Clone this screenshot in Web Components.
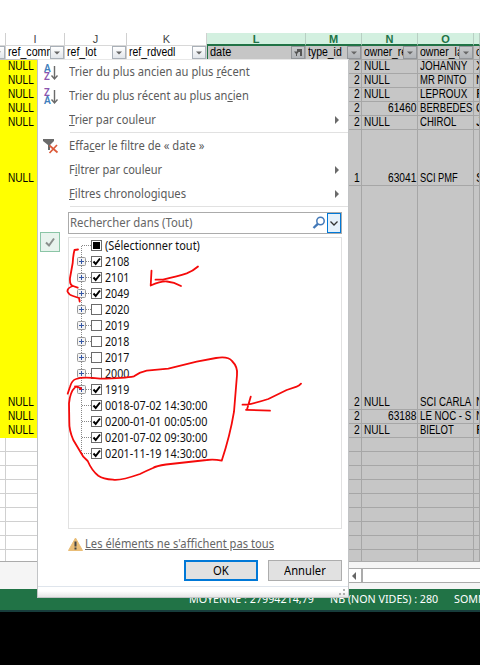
<!DOCTYPE html>
<html lang="fr"><head><meta charset="utf-8"><title>Filtre de date</title>
<style>html,body{margin:0;width:480px;height:665px;overflow:hidden;background:#000}</style></head>
<body><filter-screen></filter-screen>
<script>
const define=(name,cls)=>customElements.define(name,cls);
const mount=(el,html)=>{(el.shadowRoot||el.attachShadow({mode:'open'})).innerHTML=html;};

/* Text condensed or stretched to the width given in w */
define('fit-text',class extends HTMLElement{
  connectedCallback(){
    const w=+this.getAttribute('w');
    mount(this,`<style>:host{display:inline-block;width:${w}px;white-space:pre;text-align:left}span{display:inline-block;transform-origin:0 50%}</style><span><slot></slot></span>`);
    const s=this.shadowRoot.querySelector('span');
    const n=s.offsetWidth;
    if(n)s.style.transform=`scaleX(${w/n})`;
  }
});

const t=(s,w)=>s?`<fit-text w="${w}">${s}</fit-text>`:'';

define('filter-button',class extends HTMLElement{
  connectedCallback(){
    const on=this.hasAttribute('on'),g=this.hasAttribute('grey');
    mount(this,`<style>:host{display:block;flex:none;width:12px;height:11px;border:1px solid ${g?'#929599':'#a9b0b8'};background:${g?'linear-gradient(#c8cacc,#b2b5b9)':'linear-gradient(#fff,#e2e6eb)'}}svg{display:block}</style>
    <svg width="12" height="11">${on?'<path d="M5 2h5v7H8V5H5zM2 4.500h5L5 7v2H4V7z" fill="#555"/>':'<path d="M3 4.500h6L6 7.500z" fill="#666"/>'}</svg>`);
  }
});

define('sheet-grid',class extends HTMLElement{
  connectedCallback(){
    const cols='6px 59px 62px 80px 99px 56px 56px 56px 6px';
    const heads=['','I','J','K','L','M','N','O',''];
    const filt=[null,['ref_comm',47],['ref_lot',29],['ref_rdvedl',46],['date',21],['type_id',34],['owner_re',43],['owner_la',43],['o',6]];
    const rows=[[14,'NULL',26,'2','NULL','','JOHANNY',47,'X'],[14,'NULL',26,'2','NULL','','MR PINTO',46,'N'],[14,'NULL',26,'2','NULL','','LEPROUX',47,'F'],[14,'NULL',26,'2','','61460','BERBEDES',52,'C'],[14,'NULL',26,'2','NULL','','CHIROL',36,'J'],[56,'NULL',26,'1','','63041','SCI PMF',38,'S'],[224,'NULL',26,'2','NULL','','SCI CARLA',51,'N'],[14,'NULL',26,'2','','63188','LE NOC - S',51,'N'],[14,'NULL',26,'2','NULL','','BIELOT',34,'F']];
    for(let i=0;i<9;i++)rows.push([14,'',0,'','','','',0,'']);
    mount(this,`<style>
    :host{display:block;background:#fff;font:12px/12px "Liberation Sans",sans-serif;color:#000}
    .r{display:grid;grid-template-columns:${cols};box-sizing:border-box}
    .r>div{box-sizing:border-box;border-right:1px solid #d0d0d0;overflow:hidden;white-space:nowrap;min-width:0}
    .h{height:13px}
    .top{height:33px}
    .h>div{text-align:center;line-height:12px;height:13px;color:#444;font-size:11px;border-bottom:1px solid #d8d8d8}
    .h>.g{background:#d3f0e0;color:#217346;font-weight:bold;border-bottom:2px solid #217346;border-right-color:#b8cfc3}
    .f{height:14px}
    .f>div{display:flex;padding-left:2px;line-height:14px;height:14px;position:relative;border-bottom:1px solid #c5c5c5}
    .f fit-text{flex:none;height:13px;margin-top:-1px}.f filter-button{position:absolute;right:0;top:0}
    .f>.g,.d>.g{background:#c6c6c6;border-right-color:#a6a6a6}.f>.g{border-bottom-color:#a6a6a6}
    .d>div{display:flex;align-items:flex-end;border-bottom:1px solid #d0d0d0;padding-left:2px;padding-bottom:1px}
    .d>.g{border-bottom-color:#a6a6a6}.d>.y{background:#ff0;border-color:#ff0}.d>.n{justify-content:flex-end;padding-right:1px}
    </style>
    <div class="top"></div>
    <div class="r h">${heads.map((h,i)=>`<div class="${i>3?'g':''}">${h}</div>`).join('')}</div>
    <div class="r f">${filt.map((f,i)=>`<div class="${i>3?'g':''}"${i==4?' style="box-shadow:inset 1px 0 #217346;padding-left:3px"':''}>${f?t(f[0],f[1]):''}${i<8?`<filter-button ${i==4?'on':''} ${i>3?'grey':''}></filter-button>`:''}</div>`).join('')}</div>
    ${rows.map(r=>{const y=r[1]?'y':'';return `<div class="r d" style="height:${r[0]}px;"><div class="${y}"></div><div class="${y}">${t(r[1],26)}</div><div></div><div></div><div class="g"></div><div class="g n">${t(r[3],6)}</div><div class="g ${r[5]?'n':''}">${t(r[4],26)}${t(r[5],28)}</div><div class="g">${t(r[6],r[7])}</div><div class="g">${t(r[8],8)}</div></div>`}).join('')}`);
  }
});

define('status-strip',class extends HTMLElement{
  connectedCallback(){
    mount(this,`<style>:host{display:block;background:#f5f5f5;border-top:1px solid #ababab;box-sizing:border-box;height:51px}
    .s{height:27px;display:flex;padding:6px 0 6px 348px;box-sizing:border-box}
    .a{width:13px;box-sizing:border-box;border:1px solid #ababab;border-right:0;background:#fff}.b{flex:1;border:1px solid #ababab;border-left:2px solid #ababab;border-right:0;background:#fff}
    .g{height:21px;background:#217346;border-bottom:2px solid #173c3b;display:flex;padding-left:189px;color:#fff;font:11.500px/19px "Noto Sans",sans-serif;overflow:hidden}
    fit-text+fit-text{margin-left:16px}svg{display:block}</style>
    <div class="s"><div class="a"><svg width="12" height="13"><path d="M7 3v8L3 7z" fill="#666"/></svg></div><div class="b"></div></div>
    <div class="g">${t('MOYENNE : 27994214,79',125)}${t('NB (NON VIDES) : 280',108)}${t('SOMME : 7',54)}</div>`);
  }
});

define('menu-item',class extends HTMLElement{
  connectedCallback(){
    const k=this.getAttribute('icon');
    const az=(a,b,c,d)=>`<g font-family="Noto Sans" font-weight="600" font-size="10"><text x="1" y="8" fill="${c}">${a}</text><text x="1" y="16" fill="${d}">${b}</text></g><path d="M11.500 2v13M8.500 11.500l3 3.500 3-3.500" fill="none" stroke="#6a6a6a" stroke-width="1.400"/>`;
    const icons={az:az('A','Z','#3f80bd','#8a55ae'),za:az('Z','A','#8a55ae','#3f80bd'),
      clear:'<path d="M0 1h11v2L7 7v5H5V7L0 3z" fill="#6b6b6b"/><path d="M6.500 7.500l8 7M14 7l-7.500 8" stroke="#dc5a3a" stroke-width="1.700" fill="none"/>'};
    mount(this,`<style>:host{height:24px;display:grid;grid-template-columns:31px 1fr 14px;align-items:center;font:12px/24px "Noto Sans",sans-serif;color:#5b5b5b}svg{display:block}</style>
    <svg width="16" height="17" viewBox="0 0 16 17" style="margin-left:5px">${icons[k]||''}</svg><span><slot></slot></span>
    <svg width="6" height="9">${this.hasAttribute('more')?'<path d="M1 0v8l4-4z" fill="#6a6a6a"/>':''}</svg>`);
  }
});

define('tree-row',class extends HTMLElement{
  connectedCallback(){
    const s=this.getAttribute('state'),p=this.hasAttribute('plus'),pos=this.getAttribute('pos');
    const y1=pos=='first'?8:0,y2=pos=='last'?8:16;
    mount(this,`<style>:host{height:16px;display:flex;align-items:center;gap:3px;padding-left:8px;font:12px/16px "Noto Sans",sans-serif;color:#111}svg{display:block;flex:none}</style>
    <svg width="25" height="16"><g fill="none" stroke="#888" stroke-dasharray="1 1"><path d="M4.500 ${y1}V${y2}M5 7.500H15"/></g>
    ${p?'<rect x=".5" y="3.500" width="8" height="8" rx="1" fill="#f4f4f4" stroke="#999"/><path d="M2 7.500h5M4.500 5v5" stroke="#3557a5"/>':''}
    <rect x="14.500" y="2.500" width="10" height="10" fill="#fff" stroke="#6b6b6b"/>
    ${s=='on'?'<path d="M16.500 7.500l2.200 2.500 4.300-5.500" fill="none" stroke="#000" stroke-width="2"/>':s=='part'?'<rect x="16" y="4" width="7" height="7" fill="#000"/>':''}</svg><slot></slot>`);
  }
});

define('push-button',class extends HTMLElement{
  connectedCallback(){
    const m=this.hasAttribute('main');
    mount(this,`<style>:host{box-sizing:border-box;width:74px;height:21px;border:${m?'2px solid #0078d7':'1px solid #adadad'};background:#e1e1e1;display:flex;align-items:center;justify-content:center;font:12px/18px "Noto Sans",sans-serif;color:#000}</style><slot></slot>`);
  }
});

define('filter-menu',class extends HTMLElement{
  connectedCallback(){
    const dates=['0018-07-02 14:30:00','0200-01-01 00:05:00','0201-07-02 09:30:00','0201-11-19 14:30:00'];
    const years=[2108,2101,2049,2020,2019,2018,2017,2000,1919];
    mount(this,`<style>:host{box-sizing:border-box;display:flex;flex-direction:column;width:312px;height:539px;background:#fff;border:1px solid #c2c4c6;border-top-color:#e8e8e8}
    hr{border:0;height:1px;background:#e1e1e1;margin:0 0 1px 32px;flex:none}
    .q{margin:4px 6px 0 30px;height:22px;box-sizing:border-box;border:1px solid #ababab;display:flex;align-items:center;font:12px/19px "Noto Sans",sans-serif;color:#666;padding-left:1px;flex:none}
    .q fit-text{margin-top:-2px}
    .q svg{display:block}.q .z{margin-left:auto}.q .v{box-sizing:border-box;width:14px;height:20px;border:1px solid #0078d7;background:#e5f1fb;margin-left:1px}
    .l{margin:3px 6px 0 30px;height:292px;box-sizing:border-box;border:1px solid #e1e1e1;flex:none}
    .w{display:flex;align-items:center;height:30px;margin-left:30px;gap:2px;font:12px/18px "Noto Sans",sans-serif;color:#666;flex:none}
    .b{display:flex;gap:10px;margin:1px 0 0 146px}
    .e{margin-top:5px;border-top:1px solid #dfe5ec;height:10px;background:linear-gradient(#fff 40%,#e6e6e6);display:flex;justify-content:flex-end}
    .c{position:absolute;left:2px;top:172px;width:20px;height:20px;box-sizing:border-box;border:1px solid #8bc5a6;background:#e8f3ed}
    svg{display:block}</style>
    <menu-item icon="az">${t('Trier du plus ancien au plus <u>r</u>écent',181)}</menu-item>
    <menu-item icon="za">${t('Trier du plus récent au plus an<u>c</u>ien',180)}</menu-item>
    <menu-item more>${t('<u>T</u>rier par couleur',87)}</menu-item><hr>
    <menu-item icon="clear">${t('Effa<u>c</u>er le filtre de « date »',135)}</menu-item>
    <menu-item more>${t('F<u>i</u>ltrer par couleur',93)}</menu-item>
    <menu-item more>${t('<u>F</u>iltres chronologiques',117)}</menu-item><hr>
    <div class="q">${t('Rechercher dans (Tout)',122)}<svg class="z" width="14" height="14"><circle cx="8.500" cy="5" r="3.700" fill="#fff" stroke="#4379b8" stroke-width="1.500"/><path d="M5.800 7.800L1.500 12" stroke="#4379b8" stroke-width="2.400"/></svg><div class="v"><svg width="12" height="18"><path d="M2.500 7.500L6 11l3.500-3.500" fill="none" stroke="#333" stroke-width="1.300"/></svg></div></div>
    <div class="l"><tree-row state="part" pos="first">${t('(Sélectionner tout)',95)}</tree-row>
    ${years.map((y,i)=>`<tree-row plus state="${i<3||i==8?'on':'off'}">${t(y,24)}</tree-row>`).join('')}
    ${dates.map((d,i)=>`<tree-row state="on" ${i==3?'pos="last"':''}>${t(d,102)}</tree-row>`).join('')}</div>
    <div class="w"><svg width="15" height="14"><path d="M7.500 1L14.500 13.500H.5z" fill="#e9bd77" stroke="#e9bd77" stroke-linejoin="round"/><path d="M7.500 4.500v5M7.500 10.500v2" stroke="#444" stroke-width="2"/></svg>${t("<u>Les éléments ne s'affichent pas tous</u>",189)}</div>
    <div class="b"><push-button main>${t('OK',16)}</push-button><push-button>${t('Annuler',42)}</push-button></div>
    <div class="e"><svg width="10" height="10"><path d="M5 2h2v2H5zM5 6h2v2H5zM1 6h2v2H1z" fill="#b0b0b0"/></svg></div>
    <div class="c"><svg width="18" height="18"><path d="M5 9.500l3 3 5-7" fill="none" stroke="#8a8f8c" stroke-width="2"/></svg></div>`);
  }
});

define('pen-marks',class extends HTMLElement{
  connectedCallback(){
    mount(this,`<style>:host{display:block}svg{display:block}</style><svg width="480" height="665" fill="none" stroke="#f50a0a" stroke-width="1.800" stroke-linecap="round" stroke-linejoin="round">
    <path d="M78 249.500L74.500 250Q73 256 72.700 263L70 278Q69.500 285 73 286L77.700 287.700M73 286Q67 288 67.500 291.500Q69 295 73 296L79 298L79.700 301.500"/>
    <path d="M151.500 270.700L150.700 285.500Q161 281 167 281.500Q174 282 181 286M155.500 279.700H163Q178 276 186.700 273.300Q193 271 198 266.500"/>
    <path d="M67.700 393.700L70 386.700Q72 380 76 379Q83 376.500 100 378.700Q125 378 134 376.300Q140 372 146.700 370.700L168.300 368.700L196.700 361.700L216 358Q228 356 232 361Q238 367 237 375L234 411.700Q230 436 221.700 460.700Q214 459 206.700 460L166 464.500Q156 466 153 468Q146 471 140 474Q120 481 113 479.700Q103 479 98.300 475.700Q92 471 87.700 461L83.300 456.700L73.300 440Q69 430 69.300 421.700L69 403.300Q70 392 75 387.300Q77 385 81 389M75 386.500L81 388"/>
    <path d="M301 383.700Q299 386 296.700 386.700L286.700 390L268.300 399Q256 403 246.700 404.700H242.500M250.700 396.700L247 409.500M246 409.800L270 410.700"/></svg>`);
  }
});

define('filter-screen',class extends HTMLElement{
  connectedCallback(){
    mount(this,`<style>:host{display:block;position:relative;width:480px;height:665px;overflow:hidden;background:#000}
    filter-menu{position:absolute;left:37px;top:59px}pen-marks{position:absolute;left:0;top:0}
    sheet-grid{overflow:hidden;height:561px}</style>
    <sheet-grid></sheet-grid><status-strip></status-strip><filter-menu></filter-menu><pen-marks></pen-marks>`);
  }
});
</script></body></html>
